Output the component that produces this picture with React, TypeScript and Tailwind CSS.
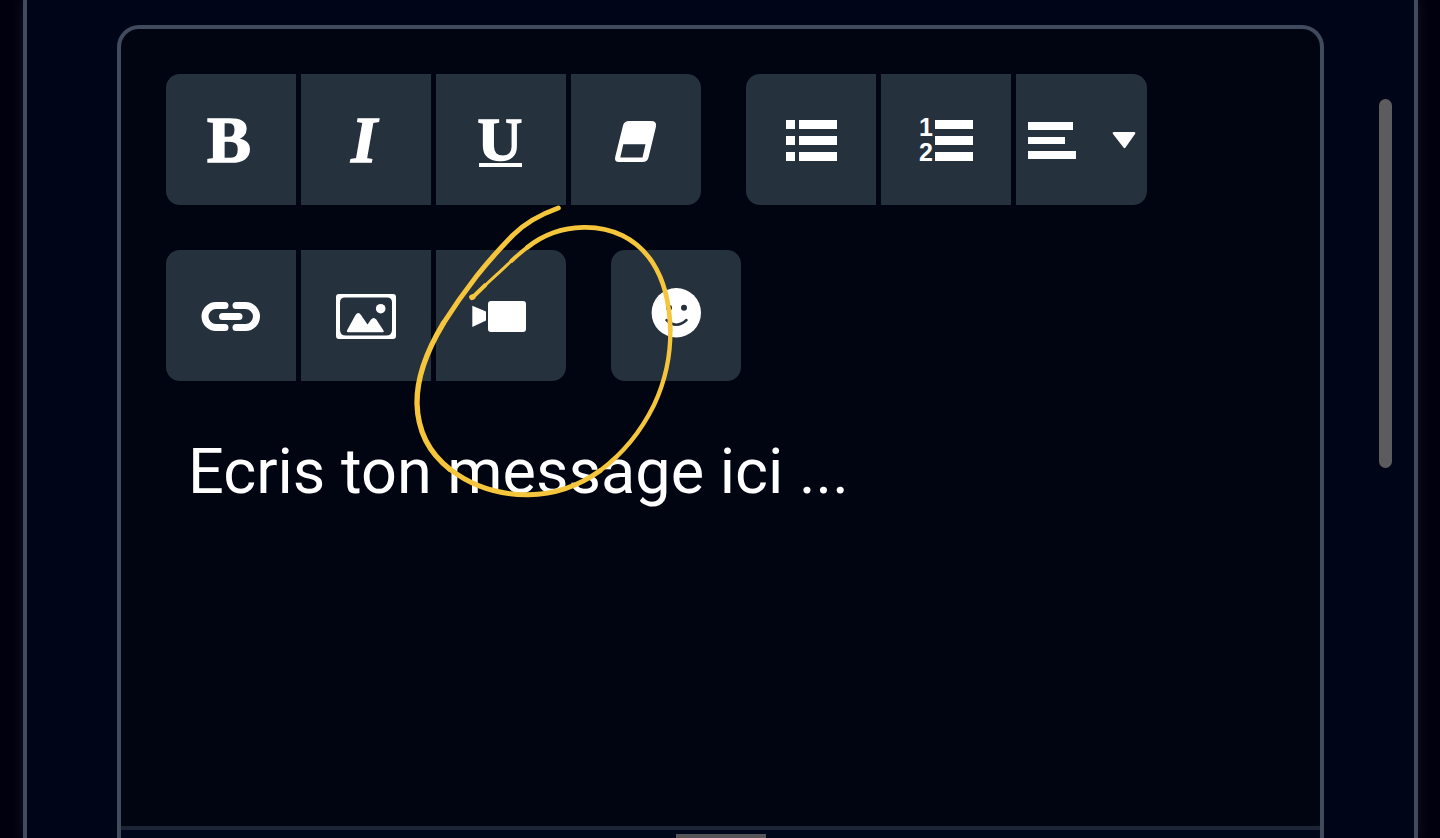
import type { ReactNode } from 'react';

type ChildrenProps = { children: ReactNode };

function Icon({ children }: ChildrenProps) {
  return (
    <svg
      className="h-[65px] w-16 shrink-0 overflow-visible fill-current"
      viewBox="0 0 64 65"
      aria-hidden="true"
    >
      {children}
    </svg>
  );
}

function ButtonGroup({ children }: ChildrenProps) {
  return (
    <div className="flex gap-[5px] overflow-hidden rounded-[14px]">
      {children}
    </div>
  );
}

function ToolButton({ label, children }: ChildrenProps & { label: string }) {
  return (
    <button
      type="button"
      aria-label={label}
      className="flex h-[131px] w-[130px] items-center justify-center bg-[#26313e] text-white"
    >
      {children}
    </button>
  );
}

function Toolbar() {
  return (
    <div className="flex flex-wrap gap-[45px] p-[45px]">
      <ButtonGroup>
        <ToolButton label="Gras">
          <Icon>
            <text
              x="30"
              y="55"
              textAnchor="middle"
              stroke="currentColor"
              strokeWidth="1.500"
              className="font-['Liberation_Serif',serif] text-[66px] font-bold"
            >
              B
            </text>
          </Icon>
        </ToolButton>
        <ToolButton label="Italique">
          <Icon>
            <text
              x="30"
              y="55"
              textAnchor="middle"
              stroke="currentColor"
              strokeWidth="1.500"
              className="font-['Liberation_Serif',serif] text-[66px] font-bold italic"
            >
              I
            </text>
          </Icon>
        </ToolButton>
        <ToolButton label="Souligné">
          <Icon>
            <text
              x="31"
              y="53"
              textAnchor="middle"
              stroke="currentColor"
              strokeWidth="1.500"
              className="font-['Liberation_Serif',serif] text-[62px] font-bold"
            >
              U
            </text>
            <rect x="10" y="56" width="43" height="4" />
          </Icon>
        </ToolButton>
        <ToolButton label="Effacer la mise en forme">
          <Icon>
            <path
              fillRule="evenodd"
              d="M25 14H47Q53 14 52 19.500L44.500 50.500Q43.300 55 38.500 55H15Q10 55 11.200 50L19 18.500Q20.200 14 25 14ZM19.300 37.300L16.300 50.500H38.500L41.500 37.300Z"
            />
          </Icon>
        </ToolButton>
      </ButtonGroup>

      <ButtonGroup>
        <ToolButton label="Liste à puces">
          <Icon>
            <path d="M7 13h9v9H7zM7 29h9v9H7zM7 45h9v9H7zM20 13h38v9H20zM20 29h38v9H20zM20 45h38v9H20z" />
          </Icon>
        </ToolButton>
        <ToolButton label="Liste numérotée">
          <Icon>
            <g className="font-['Liberation_Sans',sans-serif] text-[25px] font-bold">
              <text x="5" y="29">
                1
              </text>
              <text x="5" y="54">
                2
              </text>
            </g>
            <path d="M21 13h38v9H21zM21 29h38v9H21zM21 45h38v9H21z" />
          </Icon>
        </ToolButton>
        <button
          type="button"
          aria-label="Alignement"
          aria-haspopup="menu"
          className="flex h-[131px] w-[131px] items-center justify-between bg-[#26313e] pr-[11px] pl-3 text-white"
        >
          <svg
            className="h-[39px] w-12 fill-current"
            viewBox="0 0 48 39"
            aria-hidden="true"
          >
            <path d="M0 2h45v8H0zM0 17h37v7H0zM0 31h48v8H0z" />
          </svg>
          <svg
            className="h-[19px] w-6 fill-current"
            viewBox="0 0 24 19"
            aria-hidden="true"
          >
            <path d="M2 2H22Q24 2 23 4L13.500 17.500Q12.500 19 11.500 17.500L1 4Q0 2 2 2Z" />
          </svg>
        </button>
      </ButtonGroup>

      <ButtonGroup>
        <ToolButton label="Lien">
          <Icon>
            <path
              d="M26 22.500H17a11 11 0 0 0 0 22H26M37 22.500H46.500a11 11 0 0 1 0 22H37M23.500 33.500H40"
              fill="none"
              stroke="currentColor"
              strokeWidth="7"
              strokeLinecap="round"
            />
          </Icon>
        </ToolButton>
        <ToolButton label="Image">
          <Icon>
            <path
              fillRule="evenodd"
              d="M5 11H59Q62 11 62 14V53Q62 56 59 56H5Q2 56 2 53V14Q2 11 5 11ZM11 14.500Q6 14.500 6 19.500V47Q6 52.500 12 52.500H52Q58 52.500 58 47V19.500Q58 14.500 53 14.500Z"
            />
            <circle cx="46.700" cy="25.700" r="4.800" />
            <path d="M14 49.300Q12.300 49.300 13 47.500L21.500 32Q24.300 28 27 32L33.500 41.500L37 36.500Q39.700 33.500 42.300 36.500L49.500 47.500Q50.500 49.300 49 49.300Z" />
          </Icon>
        </ToolButton>
        <ToolButton label="Vidéo">
          <Icon>
            <rect x="19" y="18" width="38" height="31" rx="3" />
            <path d="M3.300 22.700L17 28.500V37.500L3.300 44Z" />
          </Icon>
        </ToolButton>
      </ButtonGroup>

      <ButtonGroup>
        <ToolButton label="Émoticônes">
          <Icon>
            <circle cx="32.300" cy="29.700" r="24.700" />
            <g className="fill-[#26313e]">
              <circle cx="25" cy="24.700" r="3" />
              <circle cx="40" cy="24.700" r="3" />
            </g>
            <path
              d="M22.500 37Q32.300 46.500 42.500 37"
              fill="none"
              stroke="#26313e"
              strokeWidth="2.500"
              strokeLinecap="round"
            />
          </Icon>
        </ToolButton>
      </ButtonGroup>
    </div>
  );
}

// hand-drawn ring around the video button
function Marker() {
  return (
    <svg
      className="pointer-events-none absolute top-[171px] left-[279px] h-[310px] w-[360px]"
      viewBox="0 0 1080 930"
      fill="none"
      stroke="#f5c63c"
      strokeLinecap="round"
      strokeLinejoin="round"
      aria-hidden="true"
    >
      <path
        strokeWidth="15"
        d="M475 24C425 42 378 67 340 104C300 145 265 184 230 228C192 277 158 326 130 370"
      />
      <path
        strokeWidth="16"
        d="M130 370C84 446 50 525 51 610C53 692 88 760 150 808"
      />
      <path
        strokeWidth="15"
        d="M150 808C215 858 295 885 385 884C470 883 540 855 600 812"
      />
      <path
        strokeWidth="13"
        d="M600 812C670 760 725 690 762 615C795 545 812 470 811 390"
      />
      <path
        strokeWidth="14"
        d="M811 390C809 310 792 240 758 188C710 115 635 80 550 82C480 83 425 108 382 142"
      />
      <path strokeWidth="12" d="M382 142C366 154 350 168 335 182" />
      <path strokeWidth="9" d="M335 182C320 196 305 211 290 224L250 261" />
      <path strokeWidth="12" d="M256 255L222 288" />
      <path strokeWidth="17" d="M218 291L216 292" />
    </svg>
  );
}

export default function App() {
  return (
    <main className="flex h-screen overflow-hidden bg-[#00000f] pr-[22px] pl-[23px]">
      <section className="relative flex grow border-x-4 border-[#414b5e] bg-[#000517] px-[90px] pt-[25px] shadow-[0_0_12px_rgba(255,255,255,0.08)]">
        <div className="relative flex min-w-0 grow flex-col rounded-t-[22px] border-4 border-b-0 border-[#414b5e] bg-[#000511]">
          <Toolbar />
          <textarea
            aria-label="Message"
            placeholder="Ecris ton message ici ..."
            className="block w-full grow resize-none bg-transparent px-[67px] pt-[10px] font-[Roboto,sans-serif] text-[63px] leading-[72px] text-white outline-none placeholder:text-white placeholder:opacity-100"
          />
          <div className="flex h-3 shrink-0 justify-center border-t-4 border-[#1c2536] bg-[#00071a] pt-1">
            <span className="h-1 w-[90px] bg-[#545459]" />
          </div>
          <Marker />
        </div>
        <div className="absolute top-[99px] right-[22px] h-[369px] w-[13px] rounded-full bg-[#5c5b5d]" />
      </section>
    </main>
  );
}
